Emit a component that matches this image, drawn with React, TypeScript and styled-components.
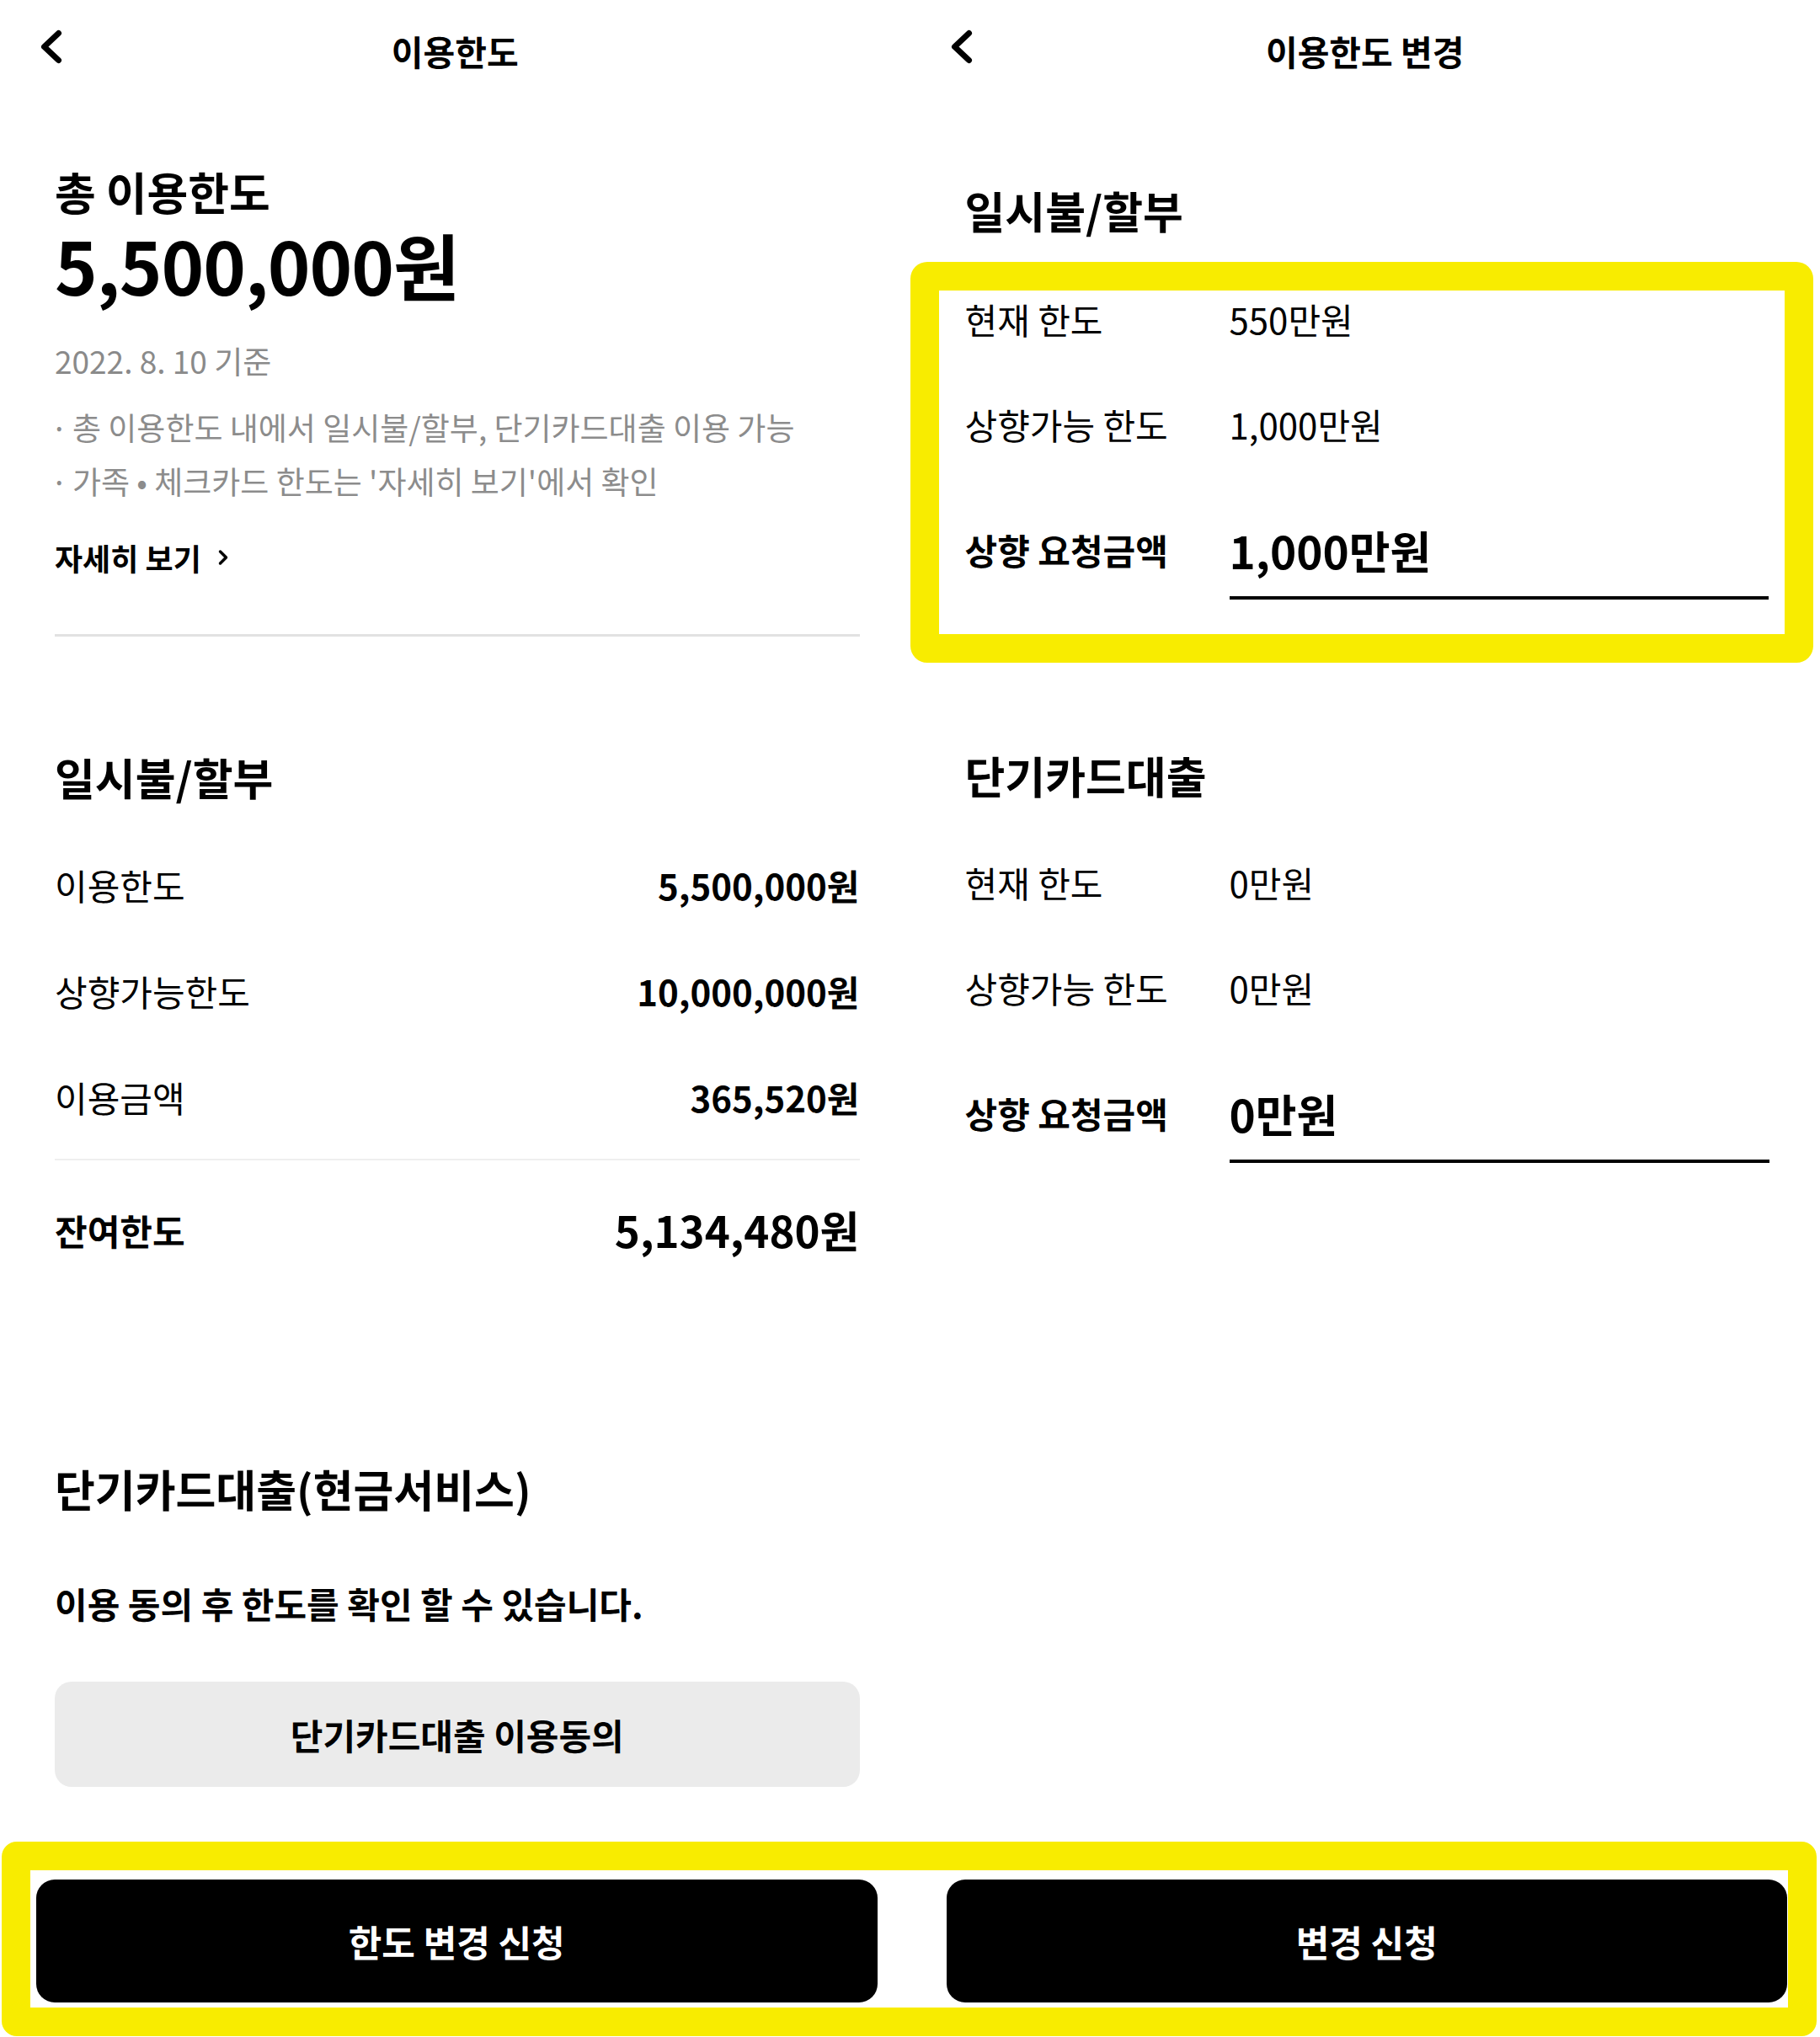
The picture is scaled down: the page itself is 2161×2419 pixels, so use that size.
import React from 'react'
import styled, { createGlobalStyle } from 'styled-components'

const YELLOW = '#f8ec00'

const GlobalStyle = createGlobalStyle`
  html, body {
    margin: 0;
    padding: 0;
    background: #ffffff;
  }
  body {
    font-family: "Noto Sans CJK KR", "Noto Sans", sans-serif;
    color: #000000;
  }
  * {
    box-sizing: border-box;
  }
`

const Page = styled.div`
  width: 2161px;
  height: 2419px;
  display: flex;
  flex-direction: column;
  overflow: hidden;
`

const Columns = styled.div`
  flex: 1;
  display: grid;
  grid-template-columns: 1fr 1fr;
`

const Panel = styled.section`
  display: flex;
  flex-direction: column;
  padding: 0 60px 0 65px;
`

const Header = styled.header`
  height: 120px;
  margin: 0 -60px 0 -65px;
  padding: 0 45px;
  display: grid;
  grid-template-columns: 1fr auto 1fr;
  align-items: center;
`

const BackButton = styled.button`
  justify-self: start;
  width: 30px;
  height: 46px;
  padding: 0;
  margin-bottom: 8px;
  border: none;
  background: transparent;
  display: flex;
`

const Title = styled.h1`
  margin: 0;
  font-size: 41px;
  line-height: 1;
  font-weight: 700;
`

const SummaryLabel = styled.h2`
  margin: 72px 0 0;
  font-size: 53px;
  line-height: 70px;
  font-weight: 700;
`

const TotalAmount = styled.div`
  margin-top: 2px;
  font-size: 86px;
  line-height: 100px;
  font-weight: 700;
  letter-spacing: -1px;
`

const DateNote = styled.p`
  margin: 39px 0 0;
  font-size: 37px;
  line-height: 50px;
  color: #8a8a8a;
`

const Notes = styled.ul`
  margin: 22px 0 0;
  padding: 0;
  list-style: none;
`

const Note = styled.li`
  padding-left: 21px;
  font-size: 37px;
  line-height: 64px;
  color: #8c8c8c;

  &::before {
    content: '·';
    display: inline-block;
    width: 26px;
    margin-left: -26px;
  }
`

const DetailLink = styled.a`
  margin-top: 35px;
  display: flex;
  align-items: center;
  gap: 20px;
  font-size: 36px;
  line-height: 48px;
  font-weight: 700;
  color: #000;
  text-decoration: none;
`

const Divider = styled.hr<{ $top: number; $size: number; $color: string }>`
  margin: ${p => p.$top}px 0 0;
  border: none;
  height: ${p => p.$size}px;
  background: ${p => p.$color};
`

const SectionTitle = styled.h3<{ $top: number }>`
  margin: ${p => p.$top}px 0 0;
  font-size: 52px;
  line-height: 62px;
  font-weight: 700;
`

const SummaryRows = styled.div<{ $top: number }>`
  margin-top: ${p => p.$top}px;
  display: flex;
  flex-direction: column;
`

const SummaryRow = styled.div`
  height: 126px;
  display: flex;
  align-items: center;
  justify-content: space-between;
`

const RowLabel = styled.span<{ $strong?: boolean }>`
  font-size: 42px;
  font-weight: ${p => (p.$strong ? 700 : 400)};
`

const RowValue = styled.span<{ $size: number }>`
  font-size: ${p => p.$size}px;
  font-weight: 700;
`

const CashTitle = styled.h3`
  margin: 212px 0 0;
  font-size: 52px;
  line-height: 65px;
  font-weight: 700;
`

const ConsentNote = styled.p`
  margin: 76px 0 0;
  font-size: 42px;
  line-height: 56px;
  font-weight: 700;
`

const GrayButton = styled.button`
  margin-top: 65px;
  height: 125px;
  border: none;
  border-radius: 20px;
  background: #ebebeb;
  font-family: inherit;
  font-size: 42px;
  font-weight: 700;
  color: #000;
`

const HighlightBox = styled.div`
  margin: 30px -52px 0 -65px;
  border: 34px solid ${YELLOW};
  border-radius: 20px;
  padding: 0 19px 41px 31px;
`

const LimitGroup = styled.div<{ $top?: number }>`
  margin-top: ${p => p.$top ?? 0}px;
  display: flex;
  flex-direction: column;
`

const LimitRow = styled.div<{ $gap: number }>`
  margin-top: ${p => p.$gap}px;
  display: grid;
  grid-template-columns: 314px 1fr;
  align-items: start;
  line-height: 68px;

  &:first-child {
    margin-top: 0;
  }
`

const LimitLabel = styled.span<{ $strong?: boolean }>`
  font-size: 42px;
  font-weight: ${p => (p.$strong ? 700 : 400)};
`

const LimitValue = styled.span`
  font-size: 42px;
`

const AmountField = styled.div`
  padding-bottom: 21px;
  border-bottom: 4px solid #000;
  font-size: 53px;
  font-weight: 700;
`

const ActionBar = styled.footer`
  height: 231px;
  margin: 0 4px 1px 2px;
  border: 34px solid ${YELLOW};
  border-radius: 18px;
  padding: 11px 1px 6px 7px;
  display: grid;
  grid-template-columns: 1fr 1fr;
  gap: 82px;
`

const PrimaryButton = styled.button`
  border: none;
  border-radius: 22px;
  background: #000;
  color: #fff;
  font-family: inherit;
  font-size: 43px;
  font-weight: 700;
`

const BackIcon = () => (
  <svg width="30" height="46" viewBox="0 0 30 46" fill="none">
    <polyline
      points="24.5,6.5 7.5,22.5 24.5,38.5"
      stroke="#000"
      strokeWidth="7"
      strokeLinecap="round"
      strokeLinejoin="round"
    />
  </svg>
)

const SmallChevron = () => (
  <svg width="12" height="20" viewBox="0 0 12 20" fill="none">
    <polyline
      points="2.5,3 9.5,10 2.5,17"
      stroke="#000"
      strokeWidth="3.5"
      strokeLinecap="round"
      strokeLinejoin="round"
    />
  </svg>
)

const installment = [
  { label: '이용한도', value: '5,500,000원' },
  { label: '상향가능한도', value: '10,000,000원' },
  { label: '이용금액', value: '365,520원' },
]

function LimitPanel() {
  return (
    <Panel>
      <Header>
        <BackButton aria-label="뒤로">
          <BackIcon />
        </BackButton>
        <Title>이용한도</Title>
      </Header>

      <SummaryLabel>총 이용한도</SummaryLabel>
      <TotalAmount>5,500,000원</TotalAmount>
      <DateNote>2022. 8. 10 기준</DateNote>
      <Notes>
        <Note>총 이용한도 내에서 일시불/할부, 단기카드대출 이용 가능</Note>
        <Note>가족 • 체크카드 한도는 '자세히 보기'에서 확인</Note>
      </Notes>
      <DetailLink href="#">
        자세히 보기
        <SmallChevron />
      </DetailLink>
      <Divider $top={67} $size={3} $color="#e2e2e2" />

      <SectionTitle $top={136}>일시불/할부</SectionTitle>
      <SummaryRows $top={33}>
        {installment.map(row => (
          <SummaryRow key={row.label}>
            <RowLabel>{row.label}</RowLabel>
            <RowValue $size={42}>{row.value}</RowValue>
          </SummaryRow>
        ))}
      </SummaryRows>
      <Divider $top={11} $size={2} $color="#efefef" />
      <SummaryRows $top={19}>
        <SummaryRow>
          <RowLabel $strong>잔여한도</RowLabel>
          <RowValue $size={51}>5,134,480원</RowValue>
        </SummaryRow>
      </SummaryRows>

      <CashTitle>단기카드대출(현금서비스)</CashTitle>
      <ConsentNote>이용 동의 후 한도를 확인 할 수 있습니다.</ConsentNote>
      <GrayButton>단기카드대출 이용동의</GrayButton>
    </Panel>
  )
}

function LimitGroupRows({ current, available, request }: { current: string; available: string; request: string }) {
  return (
    <>
      <LimitRow $gap={0}>
        <LimitLabel>현재 한도</LimitLabel>
        <LimitValue>{current}</LimitValue>
      </LimitRow>
      <LimitRow $gap={57}>
        <LimitLabel>상향가능 한도</LimitLabel>
        <LimitValue>{available}</LimitValue>
      </LimitRow>
      <LimitRow $gap={81}>
        <LimitLabel $strong>상향 요청금액</LimitLabel>
        <AmountField>{request}</AmountField>
      </LimitRow>
    </>
  )
}

function ChangePanel() {
  return (
    <Panel>
      <Header>
        <BackButton aria-label="뒤로">
          <BackIcon />
        </BackButton>
        <Title>이용한도 변경</Title>
      </Header>

      <SectionTitle $top={99}>일시불/할부</SectionTitle>
      <HighlightBox>
        <LimitGroup>
          <LimitGroupRows current="550만원" available="1,000만원" request="1,000만원" />
        </LimitGroup>
      </HighlightBox>

      <SectionTitle $top={103}>단기카드대출</SectionTitle>
      <LimitGroup $top={62}>
        <LimitGroupRows current="0만원" available="0만원" request="0만원" />
      </LimitGroup>
    </Panel>
  )
}

export default function App() {
  return (
    <>
      <GlobalStyle />
      <Page>
        <Columns>
          <LimitPanel />
          <ChangePanel />
        </Columns>
        <ActionBar>
          <PrimaryButton>한도 변경 신청</PrimaryButton>
          <PrimaryButton>변경 신청</PrimaryButton>
        </ActionBar>
      </Page>
    </>
  )
}
